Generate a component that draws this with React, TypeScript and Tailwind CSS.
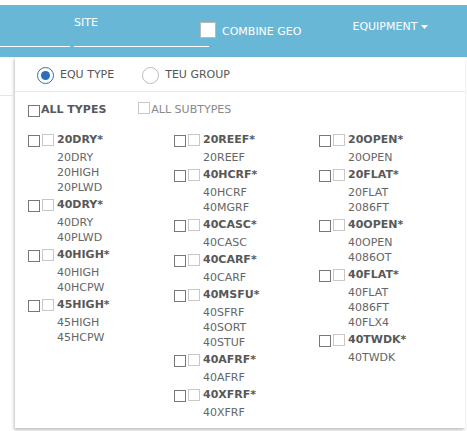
import React from "react";

type Group = { name: string; subs: string[] };

const COLUMNS: Group[][] = [
  [
    { name: "20DRY", subs: ["20DRY", "20HIGH", "20PLWD"] },
    { name: "40DRY", subs: ["40DRY", "40PLWD"] },
    { name: "40HIGH", subs: ["40HIGH", "40HCPW"] },
    { name: "45HIGH", subs: ["45HIGH", "45HCPW"] },
  ],
  [
    { name: "20REEF", subs: ["20REEF"] },
    { name: "40HCRF", subs: ["40HCRF", "40MGRF"] },
    { name: "40CASC", subs: ["40CASC"] },
    { name: "40CARF", subs: ["40CARF"] },
    { name: "40MSFU", subs: ["40SFRF", "40SORT", "40STUF"] },
    { name: "40AFRF", subs: ["40AFRF"] },
    { name: "40XFRF", subs: ["40XFRF"] },
  ],
  [
    { name: "20OPEN", subs: ["20OPEN"] },
    { name: "20FLAT", subs: ["20FLAT", "2086FT"] },
    { name: "40OPEN", subs: ["40OPEN", "4086OT"] },
    { name: "40FLAT", subs: ["40FLAT", "4086FT", "40FLX4"] },
    { name: "40TWDK", subs: ["40TWDK"] },
  ],
];

const font = { fontFamily: '"DejaVu Sans", Verdana, sans-serif' };

function Box({ light }: { light?: boolean }) {
  return (
    <span
      className={`inline-block w-[12px] h-[12px] bg-white border ${
        light ? "border-[#c8c8c8]" : "border-[#777]"
      }`}
    />
  );
}

function Radio({ checked }: { checked?: boolean }) {
  return (
    <span
      className={`flex items-center justify-center w-[17px] h-[17px] rounded-full bg-white border ${
        checked ? "border-[#2c6fb8]" : "border-[#bbb]"
      }`}
    >
      {checked && <span className="w-[9px] h-[9px] rounded-full bg-[#2c6fb8]" />}
    </span>
  );
}

function TypeGroup({ group }: { group: Group }) {
  return (
    <div className="mb-[2px]">
      <div className="flex items-center h-[17px]">
        <Box />
        <span className="ml-[2px]">
          <Box light />
        </span>
        <span className="ml-[3px] text-[11px] font-bold text-[#585858]">{group.name}*</span>
      </div>
      <div className="mt-[1px] pl-[29px]">
        {group.subs.map((s) => (
          <div key={s} className="h-[15px] leading-[15px] text-[11px] text-[#666]">
            {s}
          </div>
        ))}
      </div>
    </div>
  );
}

export default function App() {
  return (
    <div className="w-[467px] h-[431px] bg-white overflow-hidden" style={font}>
      <div className="pt-[5px]">
        {/* header bar */}
        <div className="h-[52px] bg-[#69b7d6] flex items-start text-white text-[11px]">
          <div className="w-[70px] h-[42px] border-b border-white" />
          <div className="ml-[4px] w-[135px] h-[42px] border-b border-white pt-[11px] leading-[13px]">
            SITE
          </div>
          <div className="ml-[-9px] mt-[15px] flex items-center">
            <span className="w-[16px] h-[16px] bg-white border border-[#bbb]" />
            <span className="ml-[6px] pt-[4px]">COMBINE GEO</span>
          </div>
          <div className="ml-[51px] mt-[15px] flex items-center leading-[13px]">
            <span>EQUIPMENT</span>
            <svg className="ml-[4px]" width="7" height="4" viewBox="0 0 7 4">
              <path d="M0 0h7L3.5 4z" fill="white" />
            </svg>
          </div>
        </div>

        {/* dropdown panel */}
        <div className="relative">
          <div className="absolute left-0 top-[38px] w-[15px] border-b border-[#e6e6e6]" />
          <div className="ml-[15px] w-[450px] h-[371px] bg-white shadow-[-1px_2px_3px_rgba(0,0,0,0.25)] text-[#555]">
            <div className="h-[35px] pt-[2px] border-b border-[#e8e8e8] flex items-center pl-[22px] text-[11px] text-[#555]">
              <Radio checked />
              <span className="ml-[6px]">EQU TYPE</span>
              <span className="ml-[28px]">
                <Radio />
              </span>
              <span className="ml-[6px]">TEU GROUP</span>
            </div>

            <div className="flex items-center h-[17px] mt-[10px] pl-[13px] text-[11px]">
              <Box />
              <span className="ml-[1px] font-bold text-[#585858]">ALL TYPES</span>
              <span className="ml-[32px]">
                <Box light />
              </span>
              <span className="ml-[1px] text-[#888]">ALL SUBTYPES</span>
            </div>

            <div className="grid grid-cols-[146px_145px_146px] mt-[13px] pl-[13px]">
              {COLUMNS.map((col, i) => (
                <div key={i}>
                  {col.map((g) => (
                    <TypeGroup key={g.name} group={g} />
                  ))}
                </div>
              ))}
            </div>
          </div>
        </div>
      </div>
    </div>
  );
}
